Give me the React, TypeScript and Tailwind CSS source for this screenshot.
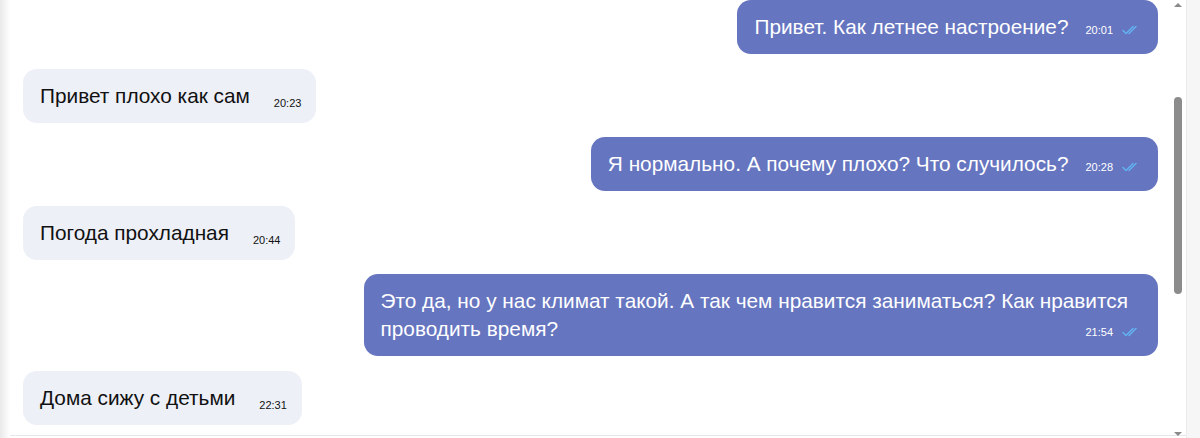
import React from "react";

type Msg = { text: string; time: string; mine: boolean };

const messages: Msg[] = [
  { text: "Привет. Как летнее настроение?", time: "20:01", mine: true },
  { text: "Привет плохо как сам", time: "20:23", mine: false },
  { text: "Я нормально. А почему плохо? Что случилось?", time: "20:28", mine: true },
  { text: "Погода прохладная", time: "20:44", mine: false },
  {
    text: "Это да, но у нас климат такой. А так чем нравится заниматься? Как нравится проводить время?",
    time: "21:54",
    mine: true,
  },
  { text: "Дома сижу с детьми", time: "22:31", mine: false },
];

function DoubleCheck() {
  return (
    <svg width="18" height="10" viewBox="0 0 18 10" fill="none" className="ml-[9px]">
      <path d="M1 5.5 L4 8.5 L11 1.5" stroke="#62b3f2" strokeWidth="1.5" strokeLinecap="round" strokeLinejoin="round" />
      <path d="M7 8.5 L14 1.5" stroke="#62b3f2" strokeWidth="1.5" strokeLinecap="round" strokeLinejoin="round" />
    </svg>
  );
}

function Bubble({ m }: { m: Msg }) {
  if (m.mine) {
    return (
      <div className="self-end max-w-[70%] flow-root rounded-[14px] bg-[#6675bf] pl-[17px] pr-[18px] py-[13px] text-white">
        <span className="text-[20.8px] leading-[28px]">{m.text}</span>
        <span className="float-right relative top-[3px] ml-[17px] flex items-center h-[28px] text-[11px] text-white">
          <span>{m.time}</span>
          <DoubleCheck />
        </span>
      </div>
    );
  }
  return (
    <div className="self-start max-w-[70%] flow-root rounded-[14px] bg-[#edf0f7] pl-[17px] pr-[15px] py-[13px] text-[#111]">
      <span className="text-[20.8px] leading-[28px]">{m.text}</span>
      <span className="float-right relative top-[8px] ml-[24px] flex items-center h-[28px] text-[11px] text-[#111]">
        {m.time}
      </span>
    </div>
  );
}

export default function App() {
  return (
    <div
      className="w-[1200px] h-[438px] flex bg-white overflow-hidden"
      style={{ fontFamily: '"Liberation Sans", Arial, sans-serif' }}
    >
      <div className="w-[10px] h-full bg-gradient-to-r from-[#e9e9e9] to-white" />
      <div className="flex-1 h-[436px] flex border-b border-[#e6e6e6]">
        <div className="flex-1 flex flex-col gap-[14.5px] pl-[13px] pr-[12px] pt-0 overflow-hidden">
          {messages.map((m, i) => (
            <Bubble key={i} m={m} />
          ))}
        </div>
        <div className="w-[16px] flex flex-col items-center justify-between py-[3px] bg-white">
          <div className="w-0 h-0 border-l-[4px] border-r-[4px] border-b-[4px] border-l-transparent border-r-transparent border-b-[#8a8a8a]" />
          <div className="flex-1 w-full flex flex-col items-center pt-[90px] pb-[138px]">
            <div className="w-[8px] h-[197px] rounded-full bg-[#8c8c8c]" />
          </div>
          <div className="w-0 h-0 border-l-[4px] border-r-[4px] border-t-[4px] border-l-transparent border-r-transparent border-t-[#8a8a8a]" />
        </div>
      </div>
      <div className="w-[14px] h-full bg-[#f6f6f6] border-l border-[#ececec]" />
    </div>
  );
}
